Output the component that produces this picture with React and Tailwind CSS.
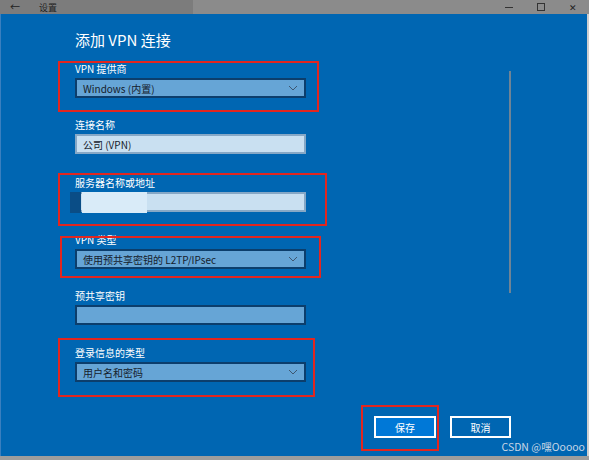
import { useState } from "react";

const FONT = { fontFamily: '"Noto Sans CJK SC", "Noto Sans", sans-serif' };

function Chevron() {
    return (
        <svg width="10" height="6" viewBox="0 0 10 6" className="mr-[6px]">
            <polyline points="1,1 5,5 9,1" fill="none" stroke="#3d5670" strokeWidth="1" />
        </svg>
    );
}

function Field({ label, mt, children }) {
    return (
        <div className="flex flex-col" style={{ marginTop: mt }}>
            <div className="text-[10px] leading-[14px] text-white">{label}</div>
            {children}
        </div>
    );
}

function Select({ value }) {
    return (
        <div className="mt-[2px] w-[231px] h-[20px] flex items-center justify-between bg-[#66a5d6] border-2 border-[#0c3e6c] pl-[6px] text-[10px] text-[#15202b]">
            <span>{value}</span>
            <Chevron />
        </div>
    );
}

function Input({ value, light, children }) {
    return (
        <div
            className={`relative mt-[2px] w-[231px] h-[20px] flex items-center border-2 pl-[6px] text-[10px] text-[#15202b] ${
                light ? "bg-[#c9e0f1] border-[#86a8c6]" : "bg-[#66a5d6] border-[#0c3e6c]"
            }`}
        >
            {value}
            {children}
        </div>
    );
}

function RedBox({ className }) {
    return <div className={`absolute border-2 border-[#e3261f] ${className}`} />;
}

export default function App() {
    const [provider] = useState("Windows (内置)");

    return (
        <div className="w-[589px] h-[460px] overflow-hidden flex flex-col bg-[#a3a3a3]" style={FONT}>
            {/* title bar */}
            <div className="h-[14px] flex text-[#222]">
                <div className="w-[193px] h-full bg-[#7c7c7c] flex items-center">
                    <span className="ml-[10px] text-[10px] leading-none">←</span>
                    <span className="ml-[19px] text-[9px] leading-none">设置</span>
                </div>
                <div className="flex-1 h-full bg-[#8b8b8b] flex items-center justify-end pr-[12px] gap-[24px] text-[9px] leading-none">
                    <span className="w-[8px] h-px bg-[#333]" />
                    <span className="w-[8px] h-[8px] border border-[#333]" />
                    <span>✕</span>
                </div>
            </div>

            <div className="flex h-[442px]">
                <div className="relative w-[587px] h-full bg-[#0066b2] border-l border-[#3a7fbf] flex flex-col">
                    <div className="flex">
                        <div className="w-[508px] pl-[74px] flex flex-col">
                            <div className="mt-[15px] text-[15px] leading-[22px] text-white">添加 VPN 连接</div>

                            <Field label="VPN 提供商" mt="11px">
                                <Select value={provider} />
                            </Field>

                            <Field label="连接名称" mt="20px">
                                <Input value="公司 (VPN)" light />
                            </Field>

                            <Field label="服务器名称或地址" mt="22px">
                                <Input light>
                                    <div className="absolute left-[-7px] top-[-2px] w-[11px] h-[21px] bg-[#0a4d86]" />
                                    <div className="absolute left-[5px] top-[-2px] w-[65px] h-[21px] bg-[#d9ebf8]" />
                                </Input>
                            </Field>

                            <Field label="VPN 类型" mt="21px">
                                <Select value="使用预共享密钥的 L2TP/IPsec" />
                            </Field>

                            <Field label="预共享密钥" mt="20px">
                                <Input />
                            </Field>

                            <Field label="登录信息的类型" mt="21px">
                                <Select value="用户名和密码" />
                            </Field>
                        </div>
                        <div className="w-[2px] h-[222px] mt-[57px] bg-[#6f8496]" />
                    </div>

                    <div className="flex justify-end gap-[14px] pr-[76px] mt-[34px]">
                        <button className="w-[62px] h-[22px] bg-[#0078d7] border-2 border-white text-white text-[10px]">
                            保存
                        </button>
                        <button className="w-[61px] h-[22px] border-2 border-white text-white text-[10px]">
                            取消
                        </button>
                    </div>

                    <RedBox className="left-[57px] top-[47px] w-[261px] h-[51px]" />
                    <RedBox className="left-[57px] top-[159px] w-[269px] h-[53px]" />
                    <RedBox className="left-[59px] top-[222px] w-[261px] h-[42px]" />
                    <RedBox className="left-[57px] top-[324px] w-[257px] h-[59px]" />
                    <RedBox className="left-[360px] top-[391px] w-[78px] h-[46px]" />

                    <div className="absolute right-[2px] bottom-[4px] text-[10.5px] leading-none text-[#c7d6e6]">
                        CSDN @嘿Ooooo
                    </div>
                </div>
                <div className="w-[2px] h-full bg-[#cfcfcf]" />
            </div>

            <div className="flex-1 bg-[#9d9d9d]" />
        </div>
    );
}
